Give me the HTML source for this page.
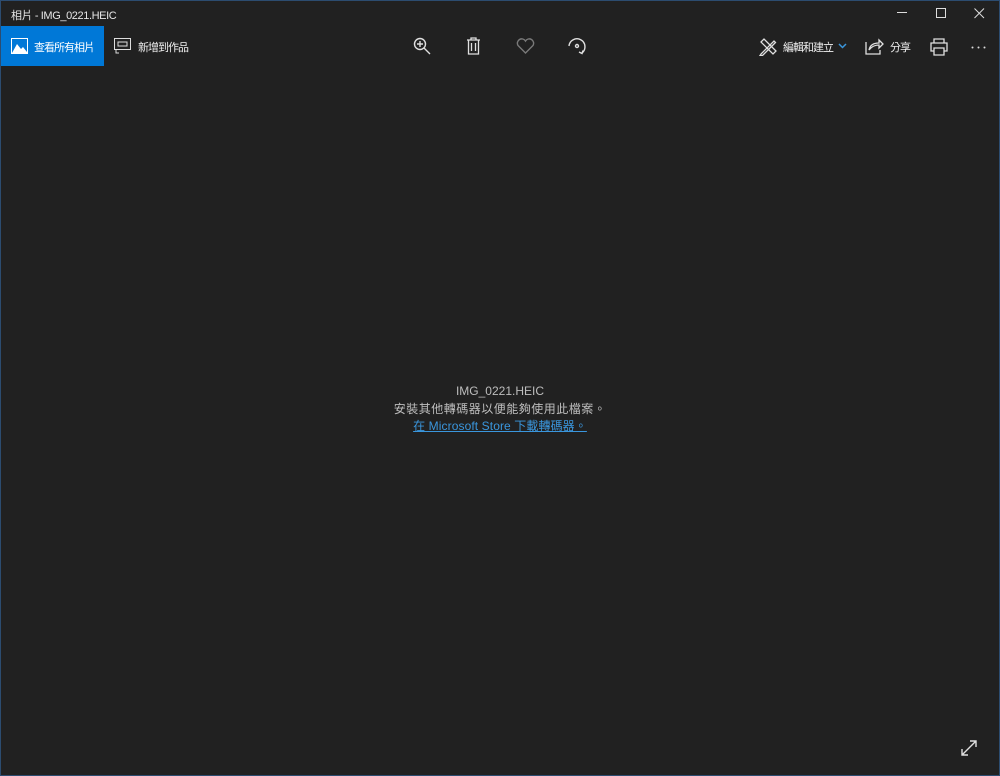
<!DOCTYPE html>
<html><head><meta charset="utf-8"><style>
*{margin:0;padding:0;box-sizing:border-box}
body{width:1000px;height:776px;background:#212121;overflow:hidden;font-family:"Liberation Sans","Noto Sans CJK TC",sans-serif;color:#fff;position:relative}
.frame{position:absolute;inset:0;border:1px solid #2c4c70;pointer-events:none;z-index:5}
.title{position:absolute;left:11px;top:7px;font-size:11px;color:#e6e6e6;white-space:nowrap;letter-spacing:-0.4px}
.all{position:absolute;left:1px;top:26px;width:103px;height:40px;background:#0078d7;font-size:11px}
.cj{font-size:11px;letter-spacing:-1px;white-space:nowrap}
.lbl{position:absolute;color:#f0f0f0;top:39px}
svg{position:absolute}
.msg{position:absolute;left:0;right:0;text-align:center;font-size:12px;color:#bdbdbd;white-space:nowrap}
</style></head><body>
<div class="frame"></div>
<div class="title">相片 - IMG_0221.HEIC</div>
<svg style="left:896px;top:12px" width="12" height="2"><rect width="10" height="1" x="1" fill="#ddd"/></svg>
<svg style="left:936px;top:8px" width="11" height="11"><rect x="0.5" y="0.5" width="9" height="9" fill="none" stroke="#ddd"/></svg>
<svg style="left:974px;top:8px" width="11" height="11"><path d="M0.5 0.5L10 10M10 0.5L0.5 10" stroke="#ddd"/></svg>
<div class="all"><svg style="left:10px;top:12px" width="17" height="16"><rect x="0.5" y="0.5" width="16" height="15" fill="none" stroke="#fff"/><path d="M1 15L6 6L10 11L12 9L16 14V15Z" fill="#fff"/></svg><span class="cj" style="position:absolute;left:33px;top:13px">查看所有相片</span></div>
<svg style="left:114px;top:38px" width="18" height="16"><rect x="0.5" y="0.5" width="16" height="11" fill="none" stroke="#ddd"/><rect x="4" y="4" width="9" height="4" fill="none" stroke="#ddd"/><path d="M2 12v3h3" fill="none" stroke="#ddd"/></svg>
<div class="lbl cj" style="left:138px">新增到作品</div>
<svg style="left:413px;top:37px" width="19" height="19" fill="none" stroke="#e0e0e0" stroke-width="1.4"><circle cx="7" cy="7" r="5.5"/><path d="M4 7h6M7 4v6M11 11l6 6"/></svg>
<svg style="left:466px;top:37px" width="15" height="18" fill="none" stroke="#e0e0e0" stroke-width="1.3"><path d="M1 3h13M5 3V1h5v2M2.5 3v14h10V3M5.5 6v8M9.5 6v8"/></svg>
<svg style="left:516px;top:38px" width="19" height="16" fill="none" stroke="#7a7a7a" stroke-width="1.4"><path d="M9.5 15L2 7.5A4 4 0 0 1 9.5 3A4 4 0 0 1 17 7.5Z"/></svg>
<svg style="left:567px;top:36px" width="20" height="21" fill="none" stroke="#e0e0e0" stroke-width="1.4"><path d="M2 10A8 8 0 1 1 15 17"/><circle cx="10" cy="10" r="1.5"/><path d="M12 16l3 1.5 1-3"/></svg>
<svg style="left:759px;top:38px" width="18" height="18" fill="none" stroke="#e0e0e0" stroke-width="1.3"><path d="M2 16L15 3l1.5 1.5L3.5 17.5L1 17.5Z"/><path d="M2 4l3-3 12 12-3 3Z"/></svg>
<div class="lbl cj" style="left:783px">編輯和建立</div>
<svg style="left:838px;top:43px" width="9" height="6"><path d="M1 1l3.5 3.5L8 1" fill="none" stroke="#3a96dd" stroke-width="1.5"/></svg>
<svg style="left:865px;top:37px" width="19" height="18" fill="none" stroke="#e0e0e0" stroke-width="1.3"><path d="M1 5v12h14v-4"/><path d="M4 13c1-5 5-7 10-7V3l4 4-4 4V8c-4 0-7 1-10 5Z"/></svg>
<div class="lbl cj" style="left:890px">分享</div>
<svg style="left:930px;top:38px" width="18" height="18" fill="none" stroke="#e0e0e0" stroke-width="1.3"><path d="M4 5V1h10v4M4 13H1V5h16v8h-3M4 10h10v7H4Z"/></svg>
<svg style="left:971px;top:46px" width="16" height="3" fill="#ddd"><circle cx="1.5" cy="1.5" r="1"/><circle cx="7.5" cy="1.5" r="1"/><circle cx="13.5" cy="1.5" r="1"/></svg>
<div class="msg" style="top:384px">IMG_0221.HEIC</div>
<div class="msg" style="top:400px;letter-spacing:0.5px">安裝其他轉碼器以便能夠使用此檔案。</div>
<div class="msg" style="top:417px;color:#3a96dd"><span style="text-decoration:underline;letter-spacing:0.1px">在 Microsoft Store 下載轉碼器。</span></div>
<svg style="left:960px;top:739px" width="18" height="18" fill="none" stroke="#e0e0e0" stroke-width="1.4"><path d="M2 16L16 2M2 10v6h6M10 2h6v6"/></svg>
</body></html>
